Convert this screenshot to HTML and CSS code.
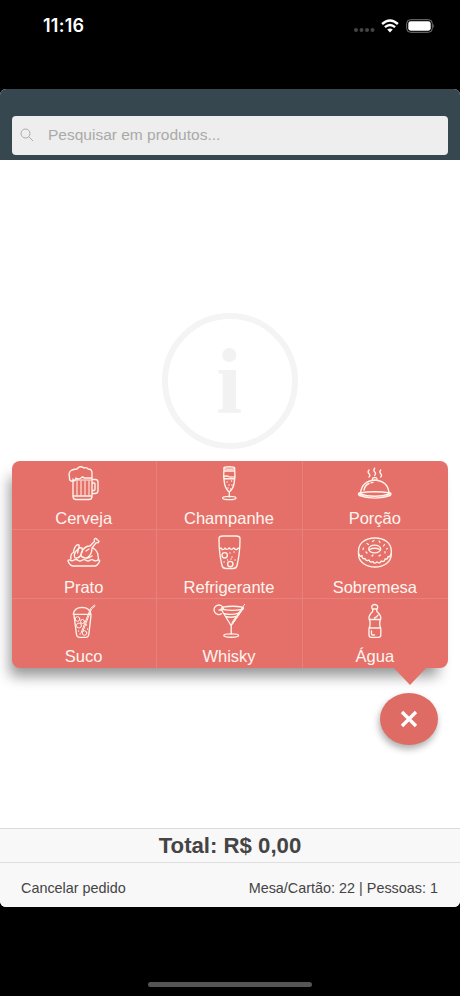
FILE: index.html
```html
<!DOCTYPE html>
<html lang="pt-BR">
<head>
<meta charset="utf-8">
<meta name="viewport" content="width=device-width">
<title>Pedido</title>
<link rel="stylesheet" href="styles.css">
</head>
<body>
<div class="status">
  <span class="time">11:16</span>
  <div class="signals">
    <svg class="dots" width="22" height="6" viewBox="0 0 22 6"><circle cx="3" cy="3" r="2"/><circle cx="8.5" cy="3" r="2"/><circle cx="14" cy="3" r="2"/><circle cx="19.5" cy="3" r="2"/></svg>
    <svg class="wifi" width="18" height="14" viewBox="0 0 18 14"><path d="M1.1 5Q9-2.2 16.9 5M3.9 8.1Q9 3.7 14.1 8.1"/><path class="solid" d="M6.2 10.5Q9 8.4 11.8 10.5L9 13.4Z"/></svg>
    <svg class="battery" width="30" height="14" viewBox="0 0 30 14"><rect class="case" x=".7" y=".7" width="25.6" height="12.6" rx="3.8"/><rect class="charge" x="2.3" y="2.3" width="22.4" height="9.4" rx="2.4"/><path class="tip" d="M27.4 4.8q1.7 2.2 0 4.4z"/></svg>
  </div>
</div>
<div class="app">
  <header class="header">
    <div class="search">
      <svg width="14" height="14" viewBox="0 0 14 14"><circle cx="5.5" cy="5.5" r="4.5"/><path d="M8.8 8.8L13 13"/></svg>
      <span>Pesquisar em produtos...</span>
    </div>
  </header>
  <main class="content">
    <svg class="info" width="136" height="136" viewBox="0 0 136 136"><circle cx="68" cy="68" r="65"/><text x="67" y="99.500" text-anchor="middle">i</text></svg>
    <div class="menu">
      <div class="item">
        <svg class="icon" viewBox="0 0 36 36"><path d="M7 14v17.500q0 3 3 3h13q3 0 3-3V13M7 16H5q-2-1-1.500-4Q2 7 6 5q3-1 5-1 3-4 7-1 3-1 4 1 4 0 4 4v5h-8q-1-2-3 0-3 2-5 0 0 3-3 3M26 14.500h3.500q2.500 0 2.500 3v8q0 3-3 3h-3M26 18h2q1 0 1 1v5q0 1.500-1 1.500h-2M7 31h19"/><path class="thin" d="M8 15h17M11 16v14M15 16v14M19 16v14M23 16v14"/></svg>
        <span>Cerveja</span>
      </div>
      <div class="item">
        <svg class="icon" viewBox="0 0 36 36"><path d="M13 3q-1 9 .6 16 1.300 5.500 4.700 8 3.400-2.500 4.700-8 1.600-7 .6-16M18.300 27v5M13 6h10.600M12.800 11.500q3-1 5 .2 3 1 5.900-.2M13 13.700h10.800"/><ellipse cx="18.300" cy="2.900" rx="5.300" ry="1.200"/><ellipse cx="18.300" cy="33" rx="6.700" ry="1.600"/><path class="dotted" d="M16 17h.1M20.500 16h.1M18 20h.1M21 20h.1M17 23h.1M19.500 24h.1"/></svg>
        <span>Champanhe</span>
      </div>
      <div class="item">
        <svg class="icon" viewBox="0 0 36 36"><path d="M3.500 28Q5 16 17.700 15 31 16 32 28M15.500 15q-.5-2.500 2.200-2.500T20 15"/><path d="M2 28q15.700-2.500 31.500 0 1 1-.3 2.500-15.200 5.300-30.900 0-1.300-1.300-.3-2.500ZM3 29q14.700 4.500 29.500 0M7 25q1-5 5-6.500M14 17.800l2-.5"/><path d="M12 5q-1.700 2 0 3.700T12 12M17.700 3.300q-1.700 2 0 3.700t0 3.300M23.700 5q-1.700 2 0 3.700t0 3.300"/></svg>
        <span>Porção</span>
      </div>
      <div class="item">
        <svg class="icon" viewBox="0 0 36 36"><path d="M2 27q0-1.400 2-1 2 1.500 4 0 2-1 4 .2 2 1.500 4 0 2-1.200 4 0 2 1.500 4 0 2-1.200 4 .3 2 .8 4-.5 2-.3 1.600 1-1.600 4.500-4.600 5H7q-3.500-.5-5-5Z"/><path d="M5 25q-1-5 2.500-6.500Q8 13 11 11q3-1 2 2l-1.500 6M9 24q-2-4 2-8 2-3 5-2 1.500 3-1 6-1 4-5 4M16 23q-2-2 0-6 3-5 8-5l4.500-4.700q-.8-2.800 1-3 1.500 0 1.500 1.600 2 .1 2 1.600-.3 1.500-3 1.300L26 14q0 6-4 9-3 2-6 0M27 14q5 3 5 8 1 2 0 4M17 23q4 3 9-1M20 17l3-2"/></svg>
        <span>Prato</span>
      </div>
      <div class="item">
        <svg class="icon" viewBox="0 0 36 36"><path d="M8 4.500Q8 2 12 2h13q4 0 4 2.500 0 15-3 27-.6 3-4 3h-7q-3.400 0-4-3-3-12-3-27Z"/><path d="M8.500 14q2.500 0 2.500 1.500Q13 16 14 14q1 2 3 1 1-1 1.500-1 1 2 3 1 1-1 1.500-1 1 2 3 1.300.5-1.300 2.500-1.300"/><circle cx="13.700" cy="21.300" r="2.700"/><circle cx="19.300" cy="30" r="2.700"/><path class="dotted" d="M19 19h.1M23 18h.1M21 23h.1M16.500 26h.1M24 26h.1M13 28h.1M20 25h.1"/></svg>
        <span>Refrigerante</span>
      </div>
      <div class="item">
        <svg class="icon" viewBox="0 0 36 36"><path d="M1.500 17C1.500 9 8.500 4 18 4s16.300 5 16.300 13v3c0 8-7.300 13-16.300 13S1.500 28 1.500 20Z"/><path d="M2 20q1 3.500 3 1.500 0 4 3 3 1 3 4 1.500 1 3 4 1.500 1 3 4 .5 3 2 4-.8 4 .8 4-2.200 3 .5 3-2.500 2 1 3-2.500"/><ellipse cx="17.700" cy="15" rx="6" ry="3.900"/><path d="M12.500 15.500q5-2.500 10.500 0"/><path class="dash" d="M10 9.500l1.500 1M15.500 7.500l1.500-1M22 7l1 1.500M27.500 10.500l-1 1.500M6.500 14l-.5 1.500M9 18l1 1M15 22l1-1M22 22l1.500-1M28 19v-1.500M30.500 14.500l-1 .5"/></svg>
        <span>Sobremesa</span>
      </div>
      <div class="item">
        <svg class="icon" viewBox="0 0 36 36"><path d="M7.300 11.300Q8 4.500 16 4.300q8 .2 9 7ZM8 12.300l2.500 19.200q.5 2.800 3 2.800h6.300q2.500 0 3-2.800l2.200-19.200"/><path class="thin" d="M28.500 2l-4 3.500L15 30M29 3l-3.500 3L17 28"/><g class="thin"><circle cx="11.500" cy="16" r="2.300"/><circle cx="13" cy="22.500" r="2.500"/><circle cx="16.500" cy="18.500" r="2"/><circle cx="18.500" cy="30" r="2.300"/></g><path class="dotted" d="M20.500 22h.1M21.500 26h.1M12.500 28h.1M14 31h.1"/></svg>
        <span>Suco</span>
      </div>
      <div class="item">
        <svg class="icon" viewBox="0 0 36 36"><path d="M10.500 10.800A4.800 4.800 0 1 1 12.500 5.500M8 7h3.500M10 6l10 16.500L32 5.500M12.500 10.500q8 2 15-.3M14.500 13.500q6 1.500 10 0M20.200 22.500v8.500"/><path class="thin" d="M33.500 1.500L21 19.500M32.500 4.500L21.500 21"/><ellipse cx="21.500" cy="5.300" rx="11" ry="2.100"/><ellipse cx="20.200" cy="32.500" rx="7.400" ry="1.700"/></svg>
        <span>Whisky</span>
      </div>
      <div class="item">
        <svg class="icon" viewBox="0 0 36 36"><path d="M15.500 6Q14 4 15.500 2.300q2.200-1.600 4.400 0Q21.400 4 20 6ZM15.700 6v2.500Q12 12 12 15q0 1.500.7 2.500.8 3 0 6-.7 1-.7 3V32q0 2.300 2.300 2.300h7.200q2.300 0 2.300-2.300v-5.500q0-2-.7-3-.8-3 0-6 .7-1 .7-2.500 0-3-4-6.500V6M12.300 16.500h11M12.300 25h11M17.500 15q2.500-1 3.500-3M14.500 28v3q0 1 1 1h2"/></svg>
        <span>Água</span>
      </div>
    </div>
    <div class="fab"><svg width="18" height="18" viewBox="0 0 18 18"><path d="M2 2l14 14M16 2L2 16"/></svg></div>
  </main>
  <div class="total">Total: R$ 0,00</div>
  <footer class="footer"><span>Cancelar pedido</span><span>Mesa/Cartão: 22 | Pessoas: 1</span></footer>
</div>
<div class="home"></div>
</body>
</html>
```
FILE: styles.css
```css
* { box-sizing: border-box; }
body {
  margin: 0;
  height: 996px;
  overflow: hidden;
  background: #000;
  font-family: "Liberation Sans", Arial, sans-serif;
  color: #444;
  display: flex;
  flex-direction: column;
}
.status {
  height: 89px;
  padding: 15px 24px 0 43px;
  display: flex;
  justify-content: space-between;
  align-items: flex-start;
  color: #fff;
}
.time { font: 600 18px/22px Inter, sans-serif; letter-spacing: .25px; }
.signals { display: flex; align-items: center; padding-top: 3px; }
.dots { fill: #444; margin: 9px 6px 0 0; }
.wifi { fill: none; stroke: #fff; stroke-width: 2.4; margin-right: 7px; }
.wifi .solid { fill: #fff; stroke: none; }
.case { fill: none; stroke: #777; }
.charge { fill: #fff; }
.tip { fill: #777; }
.app {
  height: 818px;
  border-radius: 6px;
  overflow: hidden;
  background: #fff;
  display: flex;
  flex-direction: column;
}
.header { height: 71px; padding: 27px 12px 0; background: #37474f; }
.search {
  height: 38.5px;
  display: flex;
  align-items: center;
  gap: 14px;
  padding: 0 8px 1px;
  border-radius: 4px;
  background: #eee;
  color: #a9a9a9;
  font-size: 15.5px;
}
.search svg { fill: none; stroke: #aaa; stroke-width: 1; }
.content { height: 668px; position: relative; padding-top: 153px; text-align: center; }
.info circle { fill: none; stroke: #f4f4f4; stroke-width: 6; }
.info text { font: bold 94px "Liberation Serif", serif; fill: #f2f2f2; }
.menu {
  position: absolute;
  left: 12px;
  top: 301px;
  width: 436px;
  height: 207px;
  display: grid;
  grid-template-columns: repeat(3, 1fr);
  grid-template-rows: repeat(3, 1fr);
  border-radius: 8px;
  background: #e57069;
  color: #fff5ef;
  box-shadow: -6px 12px 14px -4px rgba(0, 0, 0, .42);
}
.menu::after {
  content: "";
  position: absolute;
  right: 21px;
  top: 206px;
  border: solid transparent;
  border-width: 18px 17px 0;
  border-top-color: #e57069;
}
.item {
  display: flex;
  flex-direction: column;
  align-items: center;
  padding-top: 4px;
  border-right: 1px solid #e98079;
  border-bottom: 1px solid #e98079;
  font-size: 16.5px;
  line-height: 20px;
}
.item:nth-child(3n) { border-right: 0; }
.item:nth-child(n + 7) { border-bottom: 0; }
.item span { margin: 7px 1px 0 0; }
.icon {
  width: 36px;
  height: 36px;
  flex: none;
  fill: none;
  stroke: #fff3ea;
  stroke-width: 1.35;
  stroke-linecap: round;
  stroke-linejoin: round;
}
.thin { stroke-width: 1; }
.dotted { stroke-width: 1.3; }
.dash { stroke-width: 1.2; }
.fab {
  position: absolute;
  left: 380px;
  top: 533px;
  width: 58px;
  height: 52px;
  border-radius: 50%;
  display: flex;
  align-items: center;
  justify-content: center;
  background: #df6b65;
  box-shadow: -1px 4px 7px rgba(0, 0, 0, .32);
}
.fab svg { fill: none; stroke: #fff; stroke-width: 3.4; }
.total {
  height: 35px;
  border-top: 1px solid #dcdcdc;
  border-bottom: 1px solid #dedede;
  background: #f8f8f8;
  text-align: center;
  font-size: 22.2px;
  font-weight: bold;
  line-height: 34px;
}
.footer {
  height: 44px;
  padding: 6px 22px 0 21px;
  display: flex;
  justify-content: space-between;
  align-items: center;
  background: #f8f8f8;
  font-size: 14.4px;
}
.home { width: 164px; height: 5px; margin: 74.5px auto 0 148px; border-radius: 3px; background: #555; }
```
